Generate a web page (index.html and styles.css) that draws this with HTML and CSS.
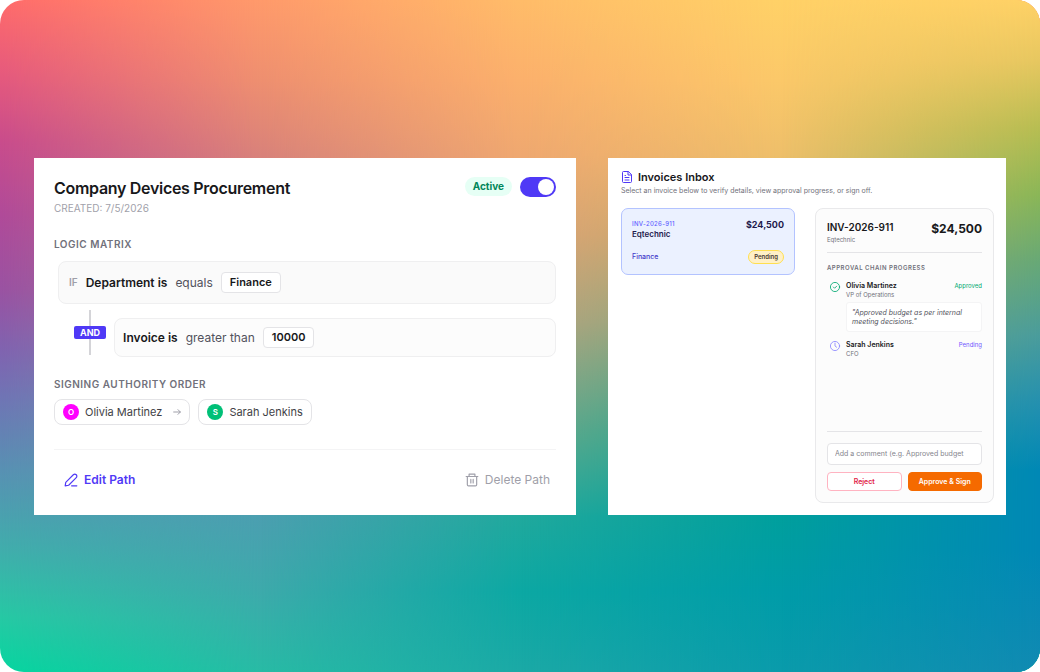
FILE: index.html
```html
<!DOCTYPE html>
<html lang="en">
<head>
    <meta charset="UTF-8">
    <meta name="viewport" content="width=device-width, initial-scale=1.0">
    <title>Approval Paths</title>
    <link rel="stylesheet" href="styles.css">
</head>
<body>
    <div class="stage">
        <div class="mesh" aria-hidden="true">
            <div class="band band-1"></div>
            <div class="band band-2"></div>
            <div class="band band-3"></div>
            <div class="band band-4"></div>
            <div class="band band-5"></div>
        </div>

        <section class="panel path">
            <header class="path-header">
                <div>
                    <h1>Company Devices Procurement</h1>
                    <p class="created">CREATED: 7/5/2026</p>
                </div>
                <div class="status">
                    <label class="status-pill" for="active">Active</label>
                    <input type="checkbox" class="toggle" id="active" checked>
                </div>
            </header>

            <h2 class="section-title">LOGIC MATRIX</h2>
            <div class="rule rule-first">
                <span class="if">IF</span>
                <strong>Department is</strong>
                <span class="operator">equals</span>
                <span class="value">Finance</span>
            </div>
            <div class="rule-row">
                <div class="connector"><span>AND</span></div>
                <div class="rule rule-next">
                    <strong>Invoice is</strong>
                    <span class="operator">greater than</span>
                    <span class="value">10000</span>
                </div>
            </div>

            <h2 class="section-title signing">SIGNING AUTHORITY ORDER</h2>
            <div class="signers">
                <div class="signer">
                    <span class="avatar pink">O</span>
                    <span>Olivia Martinez</span>
                    <svg class="arrow" viewBox="0 0 24 24"><path d="M2 12h20M15 5l7 7-7 7"/></svg>
                </div>
                <div class="signer">
                    <span class="avatar green">S</span>
                    <span>Sarah Jenkins</span>
                </div>
            </div>

            <footer class="path-footer">
                <button type="button" class="link-btn edit">
                    <svg viewBox="0 0 24 24"><path d="M2 22l1-6L16 3a3.400 3.400 0 0 1 5 5L8 21zM13 22h9"/></svg>
                    Edit Path
                </button>
                <button type="button" class="link-btn delete">
                    <svg viewBox="0 0 24 24"><path d="M2 6h20M7 6V2h10v4M4 6v14a2 2 0 0 0 2 2h12a2 2 0 0 0 2-2V6M10 11v6M14 11v6"/></svg>
                    Delete Path
                </button>
            </footer>
        </section>

        <section class="panel inbox">
            <h2 class="inbox-title">
                <svg viewBox="0 0 24 24"><path d="M14 1H5a2 2 0 0 0-2 2v18a2 2 0 0 0 2 2h14a2 2 0 0 0 2-2V8zM14 1v7h7M8 9h1M8 13h8M8 18h8"/></svg>
                Invoices Inbox
            </h2>
            <p class="inbox-hint">Select an invoice below to verify details, view approval progress, or sign off.</p>

            <div class="inbox-body">
                <article class="invoice">
                    <div class="invoice-row">
                        <div>
                            <p class="invoice-id">INV-2026-911</p>
                            <h3>Eqtechnic</h3>
                        </div>
                        <strong class="invoice-amount">$24,500</strong>
                    </div>
                    <div class="invoice-row invoice-meta">
                        <span>Finance</span>
                        <span class="badge">Pending</span>
                    </div>
                </article>

                <article class="detail">
                    <header class="detail-header">
                        <div>
                            <h3>INV-2026-911</h3>
                            <p>Eqtechnic</p>
                        </div>
                        <strong>$24,500</strong>
                    </header>

                    <h4>APPROVAL CHAIN PROGRESS</h4>
                    <ul class="chain">
                        <li>
                            <svg class="icon-approved" viewBox="0 0 24 24"><circle cx="12" cy="12" r="11"/><path d="M8 12l3 3 5-5"/></svg>
                            <div class="step">
                                <div class="step-head"><strong>Olivia Martinez</strong><span class="approved">Approved</span></div>
                                <p>VP of Operations</p>
                                <blockquote>"Approved budget as per internal meeting decisions."</blockquote>
                            </div>
                        </li>
                        <li>
                            <svg class="icon-pending" viewBox="0 0 24 24"><circle cx="12" cy="12" r="11"/><path d="M12 5v7l4 3"/></svg>
                            <div class="step">
                                <div class="step-head"><strong>Sarah Jenkins</strong><span class="pending">Pending</span></div>
                                <p>CFO</p>
                            </div>
                        </li>
                    </ul>

                    <form class="decision">
                        <input type="text" aria-label="Comment" placeholder="Add a comment (e.g. Approved budget">
                        <div class="decision-buttons">
                            <button type="button" class="reject">Reject</button>
                            <button type="button" class="approve">Approve &amp; Sign</button>
                        </div>
                    </form>
                </article>
            </div>
        </section>
    </div>
</body>
</html>
```
FILE: styles.css
```css
* {
    margin: 0;
    padding: 0;
    box-sizing: border-box;
}

body {
    background-color: #fff;
    font-family: Inter, "Liberation Sans", sans-serif;
    color: #18181b;
}

button,
input {
    font-family: inherit;
}

svg {
    flex: none;
    fill: none;
    stroke: currentColor;
    stroke-width: 2;
    stroke-linecap: round;
    stroke-linejoin: round;
    overflow: visible;
}

.stage {
    position: relative;
    display: grid;
    grid-template-columns: 542fr 398fr;
    align-items: center;
    gap: 32px;
    min-height: 100vh;
    padding: 0 34px;
    border-radius: 24px;
    overflow: hidden;
}

/* colour mesh: vertical gradients blended from left to right */
.mesh,
.band {
    position: absolute;
    inset: 0;
}

.band-1 {
    background: linear-gradient(#ff6b6b, #e65a7d 11%, #c94c8c 21%, #b04a99 32%, #9a52a2 43%, #8063b0 52%, #7074b5 59%, #5891b3 70%, #40aeac 82%, #26c9a4 92%, #06d6a0);
}

.band-2 {
    background: linear-gradient(#ff9a6b, #ee8f70 12%, #d9827a 23%, #c08088 35%, #a3889a 48%, #769ba6 60%, #4b9fb0 77%, #3daaab 88%, #28bba5);
    mask-image: linear-gradient(to right, transparent, #000 25%);
}

.band-3 {
    background: linear-gradient(#ffbc69, #fbb06c 12%, #efa870 23%, #dba277 35%, #b5a480 48%, #62a98c 65%, #20a99d 77%, #0ca8a3 88%, #1ba9a6);
    mask-image: linear-gradient(to right, transparent 25%, #000 50%);
}

.band-4 {
    background: linear-gradient(#ffd167, #fbc869 12%, #eebf6a 23%, #bfb165 35%, #7aa978 48%, #1ea38e 64%, #009f9d 77%, #009ca8 88%, #0a9bab);
    mask-image: linear-gradient(to right, transparent 50%, #000 75%);
}

.band-5 {
    background: linear-gradient(#ffd166, #e7c760 9%, #b7bd52 19%, #8ab657 29%, #67a876 39%, #4a9c9c 50%, #2490af 60%, #0088b5 70%, #0088b5 82%, #118ab2);
    mask-image: linear-gradient(to right, transparent 75%, #000);
}

.panel {
    position: relative;
    min-width: 0;
    min-height: 357px;
    background-color: #fff;
}

/* approval path */
.path {
    padding: 19px 20px;
}

.path-header {
    display: flex;
    justify-content: space-between;
    align-items: flex-start;
    margin-bottom: 19px;
}

.path-header h1 {
    font-size: 16px;
    line-height: 22px;
    font-weight: 600;
    letter-spacing: -0.3px;
}

.created {
    font-size: 10px;
    line-height: 18px;
    color: #a1a1aa;
}

.status {
    display: flex;
    align-items: center;
    gap: 8px;
}

.status-pill {
    padding: 0 8px;
    border-radius: 10px;
    background-color: #e6fff5;
    color: #00875a;
    font-size: 10px;
    line-height: 19px;
    font-weight: 700;
}

.toggle {
    appearance: none;
    display: flex;
    align-items: center;
    width: 36px;
    height: 20px;
    padding: 2px;
    border-radius: 10px;
    background-color: #d4d4d8;
    cursor: pointer;
}

.toggle::before {
    content: '';
    width: 16px;
    height: 16px;
    border-radius: 50%;
    background-color: #fff;
}

.toggle:checked {
    justify-content: flex-end;
    background-color: #4f39f6;
}

.section-title {
    margin-bottom: 9px;
    font-size: 10px;
    line-height: 16px;
    font-weight: 600;
    letter-spacing: 0.5px;
    color: #71717b;
}

.rule {
    display: flex;
    align-items: center;
    gap: 8px;
    border: 1px solid #efeff0;
    border-radius: 8px;
    background-color: #fafafa;
    font-size: 12px;
}

.rule strong {
    font-weight: 600;
}

.rule-first {
    height: 43px;
    margin-left: 4px;
    padding: 0 10px;
}

.if {
    font-size: 10px;
    font-weight: 600;
    color: #9f9fa9;
}

.operator {
    color: #52525c;
}

.value {
    padding: 0 8px;
    border: 1px solid #e4e4e7;
    border-radius: 4px;
    background-color: #fff;
    font-size: 11px;
    line-height: 19px;
    font-weight: 600;
}

.rule-row {
    display: flex;
    align-items: flex-start;
    gap: 8px;
    margin: 6px 0 19px;
    padding-left: 20px;
}

.connector {
    display: flex;
    align-items: center;
    height: 45px;
    background: linear-gradient(#d4d4d8, #d4d4d8) center / 2px 100% no-repeat;
}

.connector span {
    padding: 0 6px;
    border-radius: 2px;
    background-color: #4f39f6;
    color: #fff;
    font-size: 9px;
    line-height: 13px;
    font-weight: 700;
}

.rule-next {
    flex: 1;
    height: 39px;
    margin-top: 8px;
    padding: 0 8px;
    background-color: #fcfcfc;
}

.signing {
    margin-bottom: 7px;
}

.signers {
    display: flex;
    gap: 8px;
}

.signer {
    display: flex;
    align-items: center;
    gap: 6px;
    height: 26px;
    padding: 0 8px;
    border: 1px solid #e4e4e7;
    border-radius: 8px;
    font-size: 11px;
    color: #3f3f46;
}

.avatar {
    width: 16px;
    border-radius: 50%;
    color: #fff;
    font-size: 8px;
    line-height: 16px;
    font-weight: 600;
    text-align: center;
}

.pink {
    background-color: #f0f;
}

.green {
    background-color: #00c077;
}

.arrow {
    width: 8px;
    height: 8px;
    margin-left: 5px;
    color: #9f9fa9;
    stroke-width: 3;
}

.path-footer {
    display: flex;
    justify-content: space-between;
    margin-top: 24px;
    padding: 20px 6px 0 10px;
    border-top: 1px solid #f4f4f5;
}

.link-btn {
    display: flex;
    align-items: center;
    gap: 6px;
    border: none;
    background: none;
    font-size: 12px;
    line-height: 20px;
    cursor: pointer;
}

.link-btn svg {
    width: 14px;
    height: 14px;
}

.edit {
    color: #4f39f6;
    font-weight: 600;
}

.delete {
    color: #9f9fa9;
}

/* invoices inbox */
.inbox {
    display: flex;
    flex-direction: column;
    padding: 12px 12px 12px 13px;
}

.inbox-title {
    display: flex;
    align-items: center;
    gap: 5px;
    font-size: 11px;
    line-height: 15px;
    font-weight: 600;
}

.inbox-title svg {
    width: 12px;
    height: 12px;
    color: #4f39f6;
}

.inbox-hint {
    margin-bottom: 11px;
    font-size: 7px;
    line-height: 12px;
    color: #71717b;
}

.inbox-body {
    display: grid;
    grid-template-columns: 174fr 179fr;
    gap: 20px;
    align-items: start;
    flex: 1;
}

.invoice {
    padding: 10px;
    border: 1px solid #b3c3ff;
    border-radius: 7px;
    background-color: #ebf1ff;
    color: #1e1a4d;
}

.invoice-row {
    display: flex;
    justify-content: space-between;
    align-items: flex-start;
}

.invoice-id {
    font-size: 6px;
    line-height: 9px;
    font-weight: 500;
    letter-spacing: 0.3px;
    color: #615fff;
}

.invoice h3 {
    font-size: 8px;
    line-height: 13px;
    font-weight: 600;
}

.invoice-amount {
    font-size: 9px;
    line-height: 12px;
    font-weight: 700;
}

.invoice-meta {
    align-items: center;
    margin-top: 9px;
    font-size: 7px;
    font-weight: 500;
    color: #4338ca;
}

.badge {
    padding: 0 5px;
    border: 1px solid #ffdf50;
    border-radius: 7px;
    background-color: #fff0c7;
    color: #4a3b30;
    font-size: 6px;
    line-height: 12px;
    font-weight: 600;
}

.detail {
    display: flex;
    flex-direction: column;
    align-self: stretch;
    min-width: 0;
    padding: 11px;
    border: 1px solid #e9e9eb;
    border-radius: 8px;
    background-color: #fcfcfc;
}

.detail-header {
    display: flex;
    justify-content: space-between;
    align-items: flex-start;
    padding-bottom: 7px;
    border-bottom: 1px solid #e4e4e7;
}

.detail-header h3 {
    font-size: 10px;
    line-height: 15px;
    font-weight: 600;
}

.detail-header p {
    font-size: 6px;
    line-height: 10px;
    color: #71717b;
}

.detail-header strong {
    font-size: 12px;
    line-height: 18px;
    font-weight: 700;
}

.detail h4 {
    margin: 10px 0 8px;
    font-size: 6px;
    line-height: 10px;
    font-weight: 600;
    letter-spacing: 0.5px;
    color: #71717b;
}

.chain {
    list-style: none;
    flex: 1;
}

.chain li {
    display: flex;
    gap: 6px;
    margin-bottom: 8px;
    padding-left: 3px;
}

.chain svg {
    width: 10px;
    height: 10px;
    margin-top: 1px;
}

.icon-approved,
.approved {
    color: #00a870;
}

.icon-pending {
    color: #8b87ff;
}

.pending {
    color: #6f56ff;
}

.step {
    flex: 1;
}

.step-head {
    display: flex;
    justify-content: space-between;
    font-size: 7px;
    line-height: 10px;
}

.step-head strong {
    font-weight: 600;
}

.step-head span {
    font-size: 6px;
}

.step p {
    font-size: 6px;
    line-height: 8px;
    color: #71717b;
}

blockquote {
    margin-top: 3px;
    padding: 5px;
    border: 1px solid #f4f4f5;
    border-radius: 3px;
    background-color: #fff;
    color: #52525c;
    font-size: 7px;
    line-height: 9px;
    font-style: italic;
}

.decision {
    padding-top: 11px;
    border-top: 1px solid #e4e4e7;
}

.decision input {
    display: block;
    width: 100%;
    height: 22px;
    margin-bottom: 7px;
    padding: 0 7px;
    border: 1px solid #e4e4e7;
    border-radius: 4px;
    background-color: #fff;
    font-size: 7px;
}

.decision input::placeholder {
    color: #85858d;
}

.decision-buttons {
    display: grid;
    grid-template-columns: 1fr 1fr;
    gap: 6px;
}

.decision-buttons button {
    height: 19px;
    border: 1px solid #ffb3c1;
    border-radius: 4px;
    background-color: #fff;
    color: #e11d48;
    font-size: 7px;
    font-weight: 600;
    cursor: pointer;
}

.decision-buttons .approve {
    border-color: #f56a00;
    background-color: #f56a00;
    color: #fff;
}
```
